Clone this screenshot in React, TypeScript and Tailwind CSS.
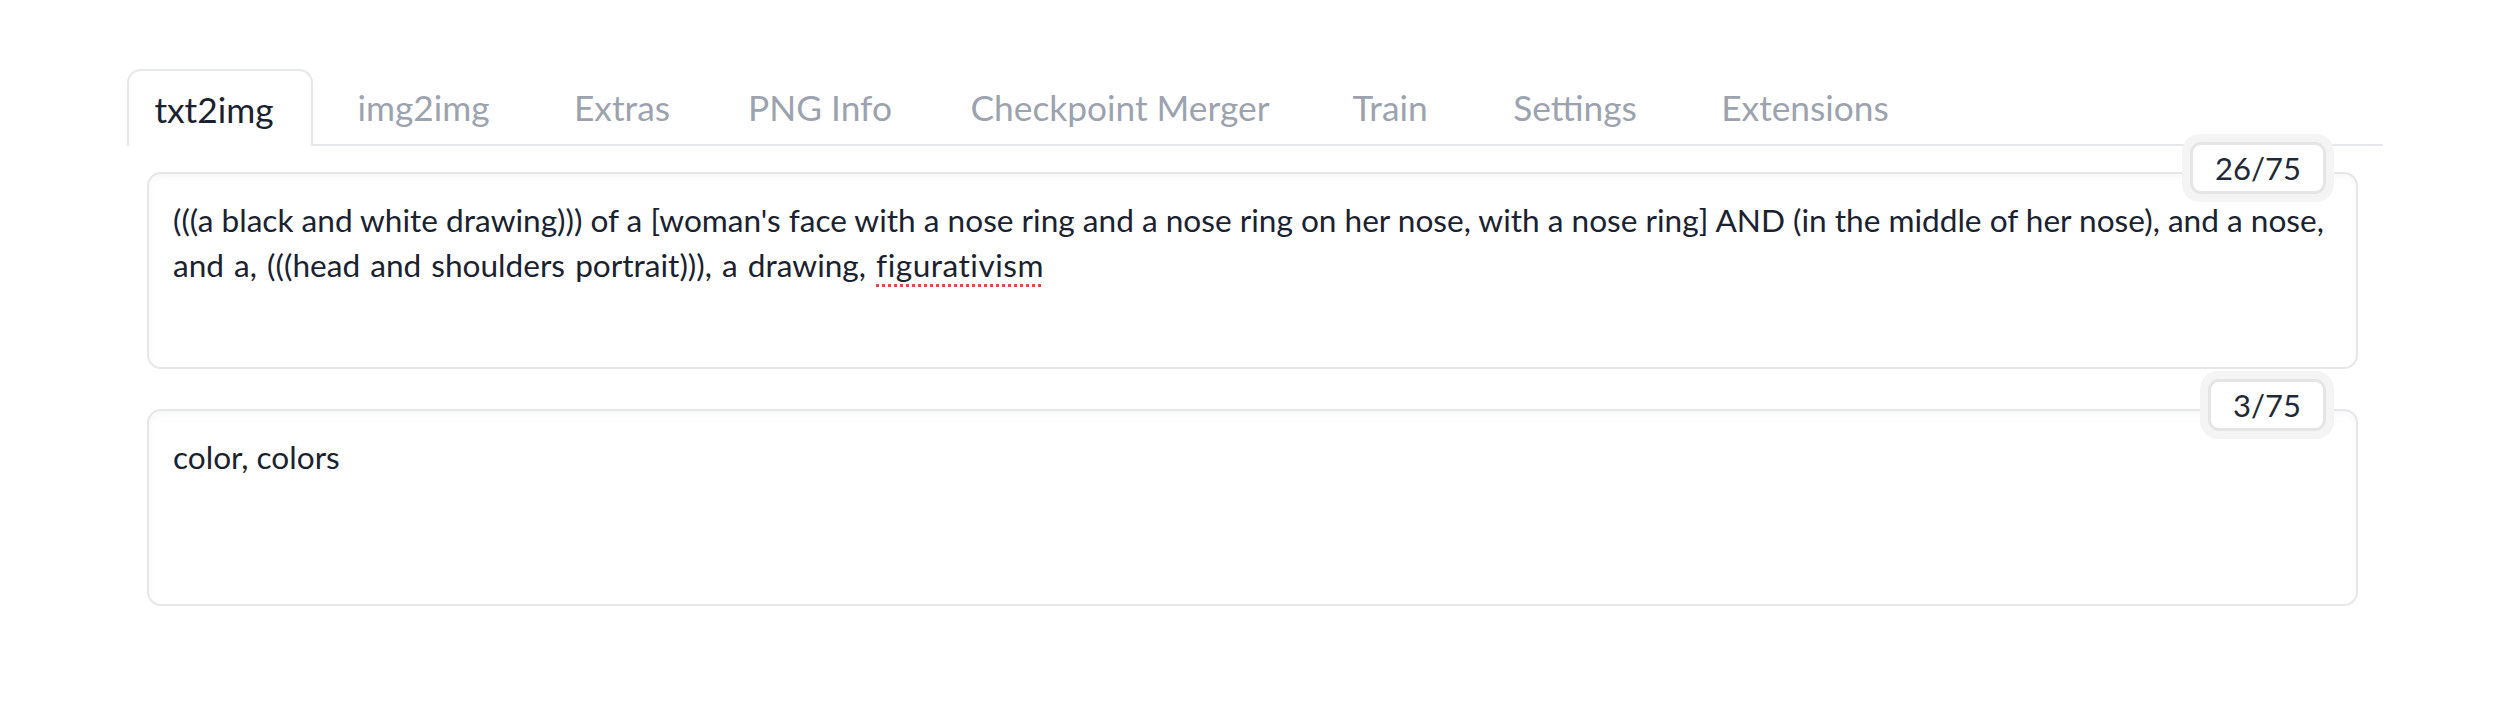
import React from 'react';

const TABS = [
  { label: 'txt2img', width: 'w-[186px]' },
  { label: 'img2img', width: 'w-[221px]' },
  { label: 'Extras', width: 'w-[176px]' },
  { label: 'PNG Info', width: 'w-[220px]' },
  { label: 'Checkpoint Merger', width: 'w-[380px]' },
  { label: 'Train', width: 'w-[160px]' },
  { label: 'Settings', width: 'w-[210px]' },
  { label: 'Extensions', width: 'w-[250px]' },
];

const Counter: React.FC<{ value: string }> = ({ value }) => (
  <div className="absolute right-[24px] -top-[38px] rounded-[18px] bg-[#f4f4f5] p-[8px]">
    <div className="flex h-[52px] items-center justify-center rounded-[11px] border-[3px] border-[#e5e5e5] bg-white px-[22px] text-[31px] text-[#1f2937]">
      {value}
    </div>
  </div>
);

const PromptBox: React.FC<{ counter: string; children: React.ReactNode }> = ({ counter, children }) => (
  <div className="relative">
    <div className="h-[197px] rounded-[14px] border-2 border-[#e5e7eb] bg-white px-[24px] pt-[24px] text-[31.6px] leading-[44.5px] text-[#1a2230] shadow-[inset_0_3px_6px_rgba(0,0,0,0.035)] [font-variant-ligatures:none]">
      {children}
    </div>
    <Counter value={counter} />
  </div>
);

const App: React.FC = () => {
  return (
    <div className="min-h-screen bg-white pt-[69px] font-['Lato','Noto_Sans',sans-serif]">
      <div className="ml-[127px] w-[2256px]">
        {/* Tab bar */}
        <div className="flex border-b-2 border-[#e5e7eb]">
          {TABS.map((tab, index) => (
            <button
              key={tab.label}
              className={
                index === 0
                  ? `${tab.width} -mb-[2px] h-[77px] rounded-t-[14px] border-2 border-b-0 border-[#e5e7eb] bg-white pr-[12px] pt-[3px] text-[35.3px] text-[#1a2230]`
                  : `${tab.width} h-[75px] pt-[3px] text-[35.3px] text-[#9ca3af]`
              }
            >
              {tab.label}
            </button>
          ))}
        </div>

        {/* Prompts */}
        <div className="flex flex-col gap-[40px] pl-[20px] pr-[25px] pt-[26px]">
          <PromptBox counter="26/75">
            <div className="whitespace-nowrap">
              (((a black and white drawing))) of a [woman's face with a nose ring and a nose ring on her nose, with a nose ring] AND (in the middle of her nose), and a nose,
            </div>
            <div className="whitespace-nowrap [word-spacing:2px]">
              and a, (((head and shoulders portrait))), a drawing,{' '}
              <span className="underline decoration-[#ef4444] decoration-dotted decoration-[3px] underline-offset-[7px] [letter-spacing:0.5px]">figurativism</span>
            </div>
          </PromptBox>
          <PromptBox counter="3/75">
            <div className="whitespace-nowrap">color, colors</div>
          </PromptBox>
        </div>
      </div>
    </div>
  );
};

export default App;
